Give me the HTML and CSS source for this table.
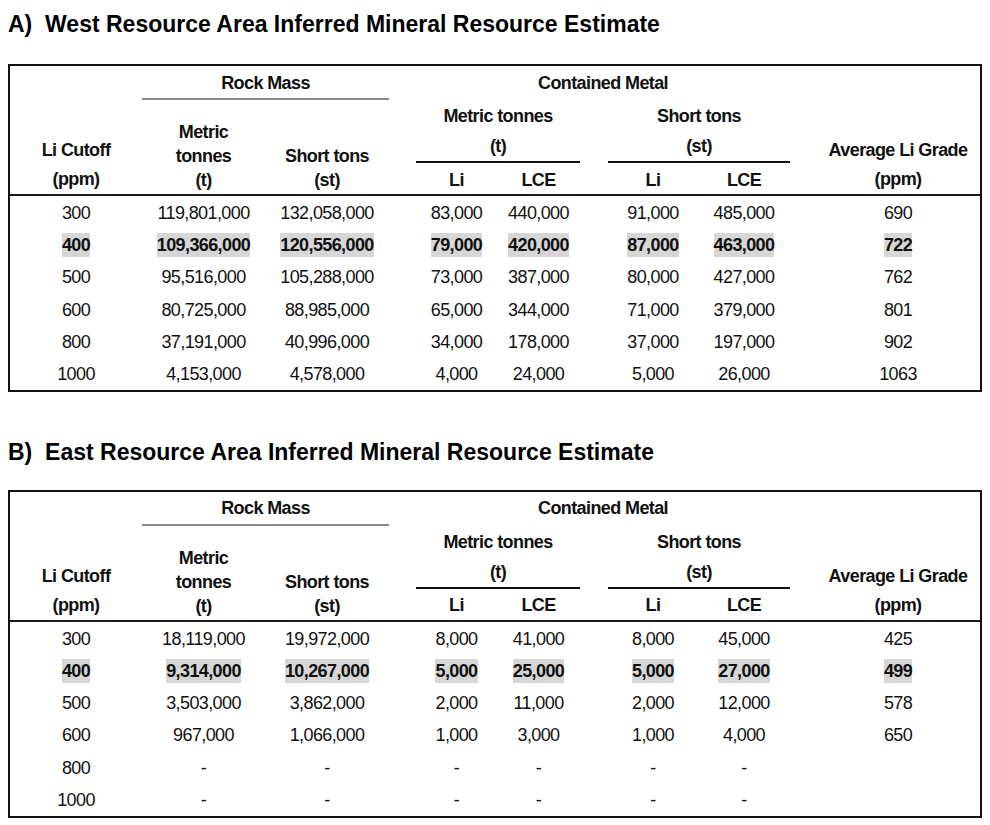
FILE: index.html
```html
<!DOCTYPE html>
<html lang="en">
<head>
<meta charset="utf-8">
<title>Inferred Mineral Resource Estimates</title>
<link rel="stylesheet" href="styles.css">
</head>
<body>
<main class="page">
  <section class="section">
    <h2 class="title">A)  West Resource Area Inferred Mineral Resource Estimate</h2>
    <div class="tbl">
      <div class="thead">
        <div class="h h-rock">Rock Mass</div>
        <div class="h h-cm">Contained Metal</div>
        <div class="h h-cut">Li Cutoff<br>(ppm)</div>
        <div class="h h-mt">Metric<br>tonnes<br>(t)</div>
        <div class="h h-st">Short tons<br>(st)</div>
        <div class="h h-mt2">Metric tonnes</div>
        <div class="h h-st2">Short tons</div>
        <div class="h h-t"><span class="rule rule-a">(t)</span></div>
        <div class="h h-st3"><span class="rule rule-b">(st)</span></div>
        <div class="h h-li1">Li</div>
        <div class="h h-lce1">LCE</div>
        <div class="h h-li2">Li</div>
        <div class="h h-lce2">LCE</div>
        <div class="h h-avg">Average Li Grade<br>(ppm)</div>
      </div>
      <div class="tbody">
        <div class="row"><div>300</div><div>119,801,000</div><div>132,058,000</div><div>83,000</div><div>440,000</div><div>91,000</div><div>485,000</div><div>690</div></div>
        <div class="row"><div><span class="hl">400</span></div><div><span class="hl">109,366,000</span></div><div><span class="hl">120,556,000</span></div><div><span class="hl">79,000</span></div><div><span class="hl">420,000</span></div><div><span class="hl">87,000</span></div><div><span class="hl">463,000</span></div><div><span class="hl">722</span></div></div>
        <div class="row"><div>500</div><div>95,516,000</div><div>105,288,000</div><div>73,000</div><div>387,000</div><div>80,000</div><div>427,000</div><div>762</div></div>
        <div class="row"><div>600</div><div>80,725,000</div><div>88,985,000</div><div>65,000</div><div>344,000</div><div>71,000</div><div>379,000</div><div>801</div></div>
        <div class="row"><div>800</div><div>37,191,000</div><div>40,996,000</div><div>34,000</div><div>178,000</div><div>37,000</div><div>197,000</div><div>902</div></div>
        <div class="row"><div>1000</div><div>4,153,000</div><div>4,578,000</div><div>4,000</div><div>24,000</div><div>5,000</div><div>26,000</div><div>1063</div></div>
      </div>
    </div>
  </section>

  <section class="section">
    <h2 class="title">B)  East Resource Area Inferred Mineral Resource Estimate</h2>
    <div class="tbl">
      <div class="thead">
        <div class="h h-rock">Rock Mass</div>
        <div class="h h-cm">Contained Metal</div>
        <div class="h h-cut">Li Cutoff<br>(ppm)</div>
        <div class="h h-mt">Metric<br>tonnes<br>(t)</div>
        <div class="h h-st">Short tons<br>(st)</div>
        <div class="h h-mt2">Metric tonnes</div>
        <div class="h h-st2">Short tons</div>
        <div class="h h-t"><span class="rule rule-a">(t)</span></div>
        <div class="h h-st3"><span class="rule rule-b">(st)</span></div>
        <div class="h h-li1">Li</div>
        <div class="h h-lce1">LCE</div>
        <div class="h h-li2">Li</div>
        <div class="h h-lce2">LCE</div>
        <div class="h h-avg">Average Li Grade<br>(ppm)</div>
      </div>
      <div class="tbody">
        <div class="row"><div>300</div><div>18,119,000</div><div>19,972,000</div><div>8,000</div><div>41,000</div><div>8,000</div><div>45,000</div><div>425</div></div>
        <div class="row"><div><span class="hl">400</span></div><div><span class="hl">9,314,000</span></div><div><span class="hl">10,267,000</span></div><div><span class="hl">5,000</span></div><div><span class="hl">25,000</span></div><div><span class="hl">5,000</span></div><div><span class="hl">27,000</span></div><div><span class="hl">499</span></div></div>
        <div class="row"><div>500</div><div>3,503,000</div><div>3,862,000</div><div>2,000</div><div>11,000</div><div>2,000</div><div>12,000</div><div>578</div></div>
        <div class="row"><div>600</div><div>967,000</div><div>1,066,000</div><div>1,000</div><div>3,000</div><div>1,000</div><div>4,000</div><div>650</div></div>
        <div class="row"><div>800</div><div>-</div><div>-</div><div>-</div><div>-</div><div>-</div><div>-</div><div></div></div>
        <div class="row"><div>1000</div><div>-</div><div>-</div><div>-</div><div>-</div><div>-</div><div>-</div><div></div></div>
      </div>
    </div>
  </section>
</main>
</body>
</html>
```
FILE: styles.css
```css
html, body {
  margin: 0;
  padding: 0;
  background: #ffffff;
}

.page {
  padding: 9px 8px 0 8px;
  color: #111111;
  font-family: "Liberation Sans", Arial, sans-serif;
  font-size: 18px;
}

.section + .section {
  margin-top: 45px;
}

.title {
  margin: 0 0 25px 0;
  font-family: "Liberation Sans", Arial, sans-serif;
  font-size: 23px;
  line-height: 30px;
  font-weight: bold;
  white-space: pre;
  color: #000000;
  letter-spacing: 0;
}

.section + .section .title {
  margin-bottom: 23px;
}

.tbl {
  border: 2px solid #111111;
  letter-spacing: -0.6px;
  --cols: 132px 123px 124px 108px 97px 104px 102px 180px;
}

.thead {
  display: grid;
  grid-template-columns: var(--cols);
  grid-template-rows: 34px 32px 31px 31px;
  border-bottom: 2px solid #1a1a1a;
  font-weight: bold;
  text-align: center;
}

.h {
  display: flex;
  flex-direction: column;
  justify-content: center;
}

.h-rock {
  grid-column: 2 / 4;
  grid-row: 1;
  border-bottom: 2px solid #8a8a8a;
  line-height: 24px;
  padding-top: 1px;
}

.h-cm {
  grid-column: 4 / 8;
  grid-row: 1;
  padding: 1px 10px 2px 27px;
  line-height: 24px;
}

.h-cut {
  grid-column: 1;
  grid-row: 2 / 5;
  justify-content: flex-end;
  line-height: 29px;
}

.h-mt,
.h-st {
  grid-row: 2 / 5;
  justify-content: flex-end;
  line-height: 24px;
  padding-bottom: 2px;
}

.h-mt { grid-column: 2; }
.h-st { grid-column: 3; }

.h-mt2 {
  grid-column: 4 / 6;
  grid-row: 2;
  padding: 0 14px 0 27px;
  line-height: 24px;
}

.h-st2 {
  grid-column: 6 / 8;
  grid-row: 2;
  padding: 0 10px 0 14px;
  line-height: 24px;
}

.h-t {
  grid-column: 4 / 6;
  grid-row: 3;
  padding: 0 14px 0 27px;
}

.h-st3 {
  grid-column: 6 / 8;
  grid-row: 3;
  padding: 0 10px 0 14px;
}

.rule {
  display: block;
  line-height: 29px;
  border-bottom: 2px solid #111111;
}

.h-li1, .h-lce1, .h-li2, .h-lce2 {
  grid-row: 4;
  line-height: 24px;
  padding-top: 2px;
}

.h-li1 { grid-column: 4; padding-left: 27px; }
.h-lce1 { grid-column: 5; padding-right: 14px; }
.h-li2 { grid-column: 6; padding-left: 14px; }
.h-lce2 { grid-column: 7; padding-right: 10px; }

.h-avg {
  grid-column: 8;
  grid-row: 1 / 5;
  justify-content: flex-end;
  line-height: 29px;
  padding-left: 16px;
}

.tbody {
  padding-top: 1px;
}

.row {
  display: grid;
  grid-template-columns: var(--cols);
  height: 32.17px;
  align-items: center;
  text-align: center;
  line-height: 24px;
}

.row > :nth-child(4) { padding-left: 27px; }
.row > :nth-child(5) { padding-right: 14px; }
.row > :nth-child(6) { padding-left: 14px; }
.row > :nth-child(7) { padding-right: 10px; }
.row > :nth-child(8) { padding-left: 16px; }

.hl {
  display: inline-block;
  background: #d6d6d6;
  font-weight: bold;
  line-height: 24px;
}
```
